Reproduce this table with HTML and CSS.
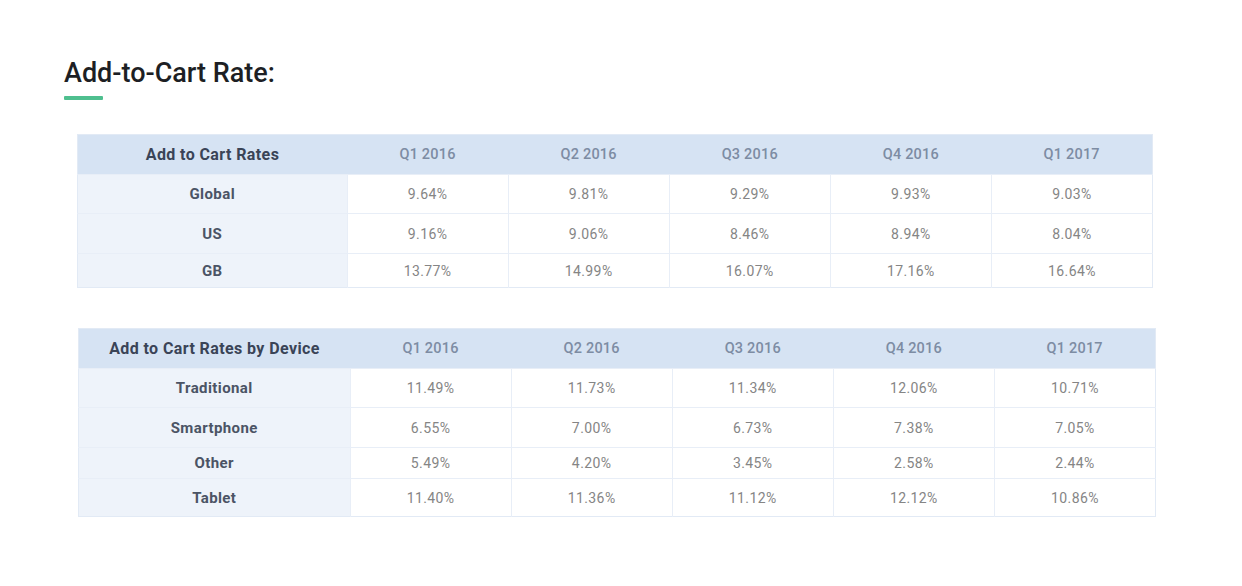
FILE: index.html
```html
<!DOCTYPE html>
<html>
<head>
<meta charset="utf-8">
<link rel="stylesheet" href="styles.css">
</head>
<body>
<div class="page">
  <h1 class="title">Add-to-Cart Rate:</h1>
  <div class="accent"></div>

  <table class="rates rates-1">
    <thead>
      <tr><th class="lead">Add to Cart Rates</th><th>Q1 2016</th><th>Q2 2016</th><th>Q3 2016</th><th>Q4 2016</th><th>Q1 2017</th></tr>
    </thead>
    <tbody>
      <tr class="r39"><td class="lab">Global</td><td>9.64%</td><td>9.81%</td><td>9.29%</td><td>9.93%</td><td>9.03%</td></tr>
      <tr class="r40"><td class="lab">US</td><td>9.16%</td><td>9.06%</td><td>8.46%</td><td>8.94%</td><td>8.04%</td></tr>
      <tr class="r34"><td class="lab">GB</td><td>13.77%</td><td>14.99%</td><td>16.07%</td><td>17.16%</td><td>16.64%</td></tr>
    </tbody>
  </table>

  <table class="rates rates-2">
    <thead>
      <tr><th class="lead">Add to Cart Rates by Device</th><th>Q1 2016</th><th>Q2 2016</th><th>Q3 2016</th><th>Q4 2016</th><th>Q1 2017</th></tr>
    </thead>
    <tbody>
      <tr class="r39"><td class="lab">Traditional</td><td>11.49%</td><td>11.73%</td><td>11.34%</td><td>12.06%</td><td>10.71%</td></tr>
      <tr class="r40"><td class="lab">Smartphone</td><td>6.55%</td><td>7.00%</td><td>6.73%</td><td>7.38%</td><td>7.05%</td></tr>
      <tr class="r31"><td class="lab">Other</td><td>5.49%</td><td>4.20%</td><td>3.45%</td><td>2.58%</td><td>2.44%</td></tr>
      <tr class="r38"><td class="lab">Tablet</td><td>11.40%</td><td>11.36%</td><td>11.12%</td><td>12.12%</td><td>10.86%</td></tr>
    </tbody>
  </table>
</div>
</body>
</html>
```

FILE: styles.css
```css
html, body {
  margin: 0;
  padding: 0;
  background: #ffffff;
}

.page {
  padding: 56px 0 0 64px;
  font-family: Roboto, "Liberation Sans", sans-serif;
}

.title {
  margin: 0;
  font-size: 27px;
  line-height: 34px;
  font-weight: 500;
  color: #1d1f24;
  letter-spacing: 0;
}

.accent {
  width: 39px;
  height: 4px;
  margin-top: 6px;
  background: #4fbf8f;
  border-radius: 1px;
}

.rates {
  border-collapse: collapse;
  table-layout: fixed;
  width: 1076px;
  margin-left: 13px;
  border: 1px solid #e2eaf5;
}

.rates-1 {
  margin-top: 34px;
}

.rates-2 {
  margin-top: 40px;
  margin-left: 14px;
  width: 1078px;
}

.rates th,
.rates td {
  text-align: center;
  padding: 0;
}

.rates thead th {
  height: 39px;
  background: #d6e3f3;
  font-size: 14.5px;
  font-weight: 500;
  color: #7d8ca3;
  letter-spacing: 0.2px;
}

.rates thead th.lead {
  width: 269px;
  font-size: 16px;
  font-weight: 700;
  color: #3a4457;
  letter-spacing: 0.4px;
}

.rates-2 thead th.lead {
  width: 271px;
}

.rates td {
  font-size: 14px;
  color: #858585;
  letter-spacing: 0.4px;
  border-top: 1px solid #e8eef7;
  border-left: 1px solid #e8eef7;
}

.rates td.lab {
  background: #eef3fa;
  font-size: 15px;
  font-weight: 700;
  color: #4b5465;
  letter-spacing: 0.4px;
  border-left: none;
}

.r40 td { height: 39px; }
.r39 td { height: 38px; }
.r38 td { height: 37px; }
.r34 td { height: 33px; }
.r31 td { height: 30px; }
```
